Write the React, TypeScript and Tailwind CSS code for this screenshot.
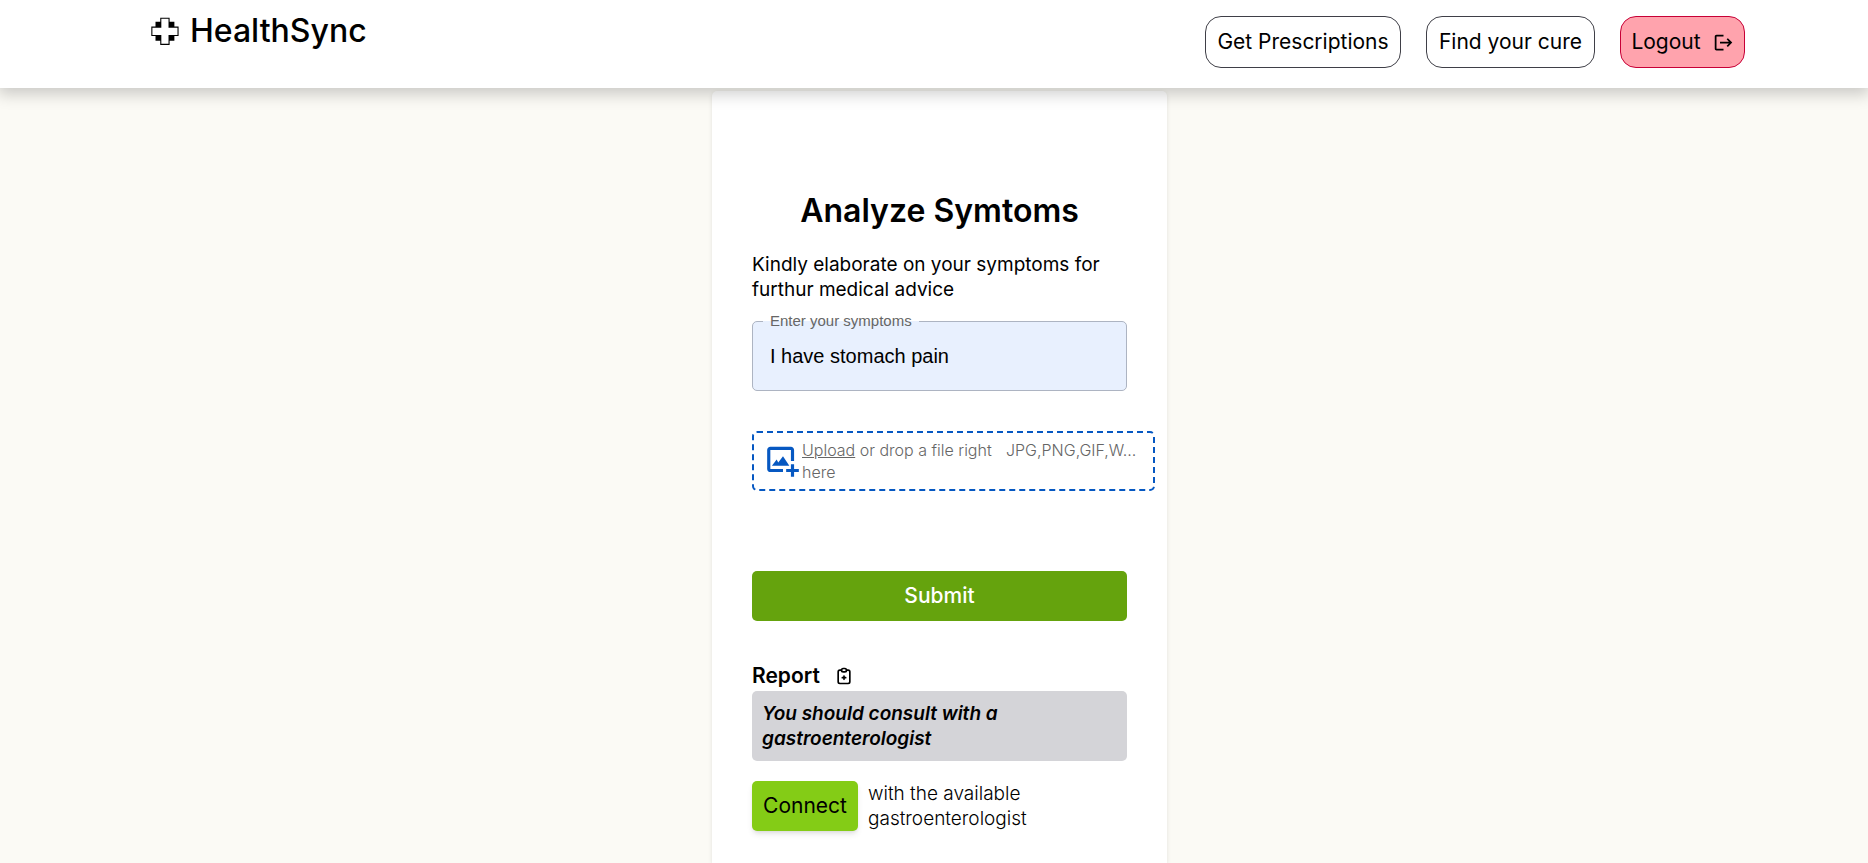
import { useState } from "react";
import { GiHospitalCross } from "react-icons/gi";
import { MdLogout } from "react-icons/md";
import { TbReportMedical } from "react-icons/tb";

const navButton =
  "flex h-[52px] cursor-pointer items-center justify-center gap-3 rounded-2xl border text-[21px] whitespace-nowrap";

function UploadIcon() {
  return (
    <svg width="38" height="38" viewBox="0 0 32 32" fill="#0658c2" className="shrink-0" aria-hidden="true">
      <path d="M5.33317 6.66667H22.6665V16H25.3332V6.66667C25.3332 5.196 24.1372 4 22.6665 4H5.33317C3.8625 4 2.6665 5.196 2.6665 6.66667V22.6667C2.6665 24.1373 3.8625 25.3333 5.33317 25.3333H15.9998V22.6667H5.33317V6.66667Z" />
      <path d="M10.6665 14.6667L6.6665 20H21.3332L15.9998 12L11.9998 17.3333L10.6665 14.6667Z" />
      <path d="M25.3332 18.6667H22.6665V22.6667H18.6665V25.3333H22.6665V29.3333H25.3332V25.3333H29.3332V22.6667H25.3332V18.6667Z" />
    </svg>
  );
}

function Header() {
  return (
    <header className="relative z-10 flex items-start justify-between bg-white pt-4 pr-[123px] pb-5 pl-[150px] shadow-[0_4px_15px_2px_rgba(0,0,0,0.2)]">
      <div className="flex items-center gap-[10px]">
        <GiHospitalCross size={30} />
        <span className="text-[32px] leading-[30px] font-medium">HealthSync</span>
      </div>
      <nav className="flex gap-[25px]">
        <button type="button" className={`${navButton} w-[196px] border-zinc-700`}>
          Get Prescriptions
        </button>
        <button type="button" className={`${navButton} w-[169px] border-zinc-700`}>
          Find your cure
        </button>
        <button type="button" className={`${navButton} w-[125px] border-rose-700 bg-[#ffa3ad]`}>
          Logout
          <MdLogout size={21} className="shrink-0" />
        </button>
      </nav>
    </header>
  );
}

export default function App() {
  const [symptoms, setSymptoms] = useState("I have stomach pain");

  return (
    <div className="flex min-h-screen flex-col bg-[#fbfaf5] font-['Inter',sans-serif] text-black">
      <Header />
      <main className="flex grow justify-center pt-[3px] pl-[11px]">
        <section className="w-[455px] rounded-t-[5px] bg-white px-10 pt-[100px] pb-8 shadow-[0_1px_4px_rgba(0,0,0,0.1)]">
          <h1 className="text-center text-[32px] leading-10 font-semibold">Analyze Symtoms</h1>
          <p className="mt-[21px] text-[19px] leading-[25px]">
            Kindly elaborate on your symptoms for furthur medical advice
          </p>

          <div className="relative mt-[19px] font-['Liberation_Sans',sans-serif]">
            <input
              id="symptoms"
              value={symptoms}
              onChange={(e) => setSymptoms(e.target.value)}
              className="block h-[70px] w-full rounded-[5px] border border-[#adb4c2] bg-[#e8f0fe] px-[17px] text-[20px]"
            />
            <label
              htmlFor="symptoms"
              className="absolute -top-[9px] left-[11px] bg-[linear-gradient(#fff_50%,#e8f0fe_50%)] px-[7px] text-[15px] leading-[18px] text-[#666]"
            >
              Enter your symptoms
            </label>
          </div>

          <label className="mt-10 flex h-[60px] w-[403px] cursor-pointer items-center rounded-[5px] border-2 border-dashed border-[#0658c2] pr-4 pl-[10px] text-[16px] leading-[22px] font-light text-[#666]">
            <UploadIcon />
            <input type="file" className="hidden" />
            <span className="grow">
              <span className="underline">Upload</span> or drop a file right here
            </span>
            <span className="w-[131px] shrink-0 self-start pt-[6px] whitespace-nowrap">JPG,PNG,GIF,W...</span>
          </label>

          <button
            type="button"
            className="mt-20 h-[50px] w-full cursor-pointer rounded-[5px] bg-[#65a30d] text-[21px] font-medium text-white"
          >
            Submit
          </button>

          <h2 className="mt-10 flex h-[30px] items-center gap-[14px] text-[21px] font-semibold">
            Report
            <TbReportMedical size={20} />
          </h2>
          <p className="rounded-[5px] bg-zinc-300 p-[10px] text-[19px] leading-[25px] font-semibold italic">
            You should consult with a gastroenterologist
          </p>

          <div className="mt-5 flex items-center gap-[10px]">
            <button
              type="button"
              className="h-[50px] w-[106px] shrink-0 cursor-pointer rounded-[5px] bg-[#84cc16] text-[21px] shadow-md"
            >
              Connect
            </button>
            <p className="text-[19px] leading-[25px] font-light">with the available gastroenterologist</p>
          </div>
        </section>
      </main>
    </div>
  );
}
